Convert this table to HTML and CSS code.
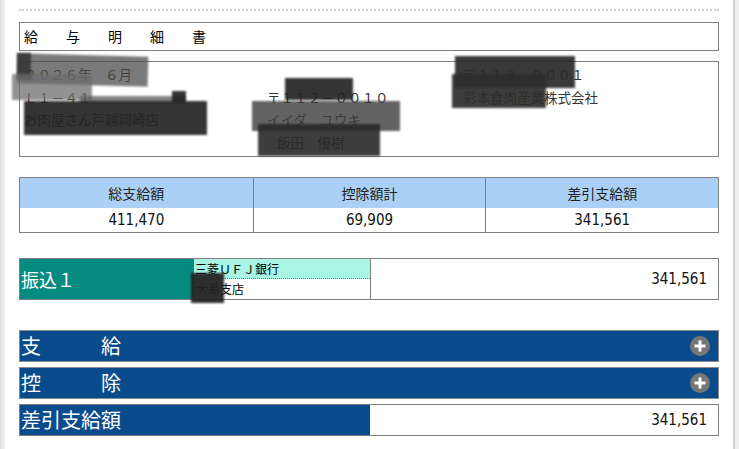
FILE: index.html
```html
<!DOCTYPE html>
<html lang="ja">
<head>
<meta charset="utf-8">
<title>給与明細書</title>
<link rel="stylesheet" href="styles.css">
</head>
<body>
<div class="frame">
  <div class="edge"></div>
  <main class="main">
    <div class="dots"></div>
    <div class="title">給与明細書</div>
    <div class="info">
      <div class="col">
        <div class="line">２０２６年　６月</div>
        <div class="line">Ｌ１－４１</div>
        <div class="line">お肉屋さん戸越岡崎店</div>
      </div>
      <div class="col col-shift">
        <div class="line">〒１１２－００１０</div>
        <div class="line">イイダ　ユウキ</div>
        <div class="line indent">飯田　優樹</div>
      </div>
      <div class="col">
        <div class="line">〒１１３－０００１</div>
        <div class="line">彩本食肉産業株式会社</div>
      </div>
    </div>
    <div class="summary">
      <div class="sum-head">総支給額</div>
      <div class="sum-head">控除額計</div>
      <div class="sum-head">差引支給額</div>
      <div class="sum-val num">411,470</div>
      <div class="sum-val num">69,909</div>
      <div class="sum-val num">341,561</div>
    </div>
    <div class="transfer">
      <div class="tr-label">振込１</div>
      <div class="tr-bank">
        <div class="bank-name">三菱ＵＦＪ銀行</div>
        <div class="branch">大島支店</div>
      </div>
      <div class="tr-amount num">341,561</div>
    </div>
    <div class="bar bar-first">
      <span class="bar-label spaced">支給</span>
      <span class="plus"><svg width="20" height="20" viewBox="0 0 20 20"><circle cx="10" cy="10" r="10" fill="#777"/><path d="M10 4.5v11M4.5 10h11" stroke="#fff" stroke-width="3"/></svg></span>
    </div>
    <div class="bar">
      <span class="bar-label spaced">控除</span>
      <span class="plus"><svg width="20" height="20" viewBox="0 0 20 20"><circle cx="10" cy="10" r="10" fill="#777"/><path d="M10 4.5v11M4.5 10h11" stroke="#fff" stroke-width="3"/></svg></span>
    </div>
    <div class="net">
      <div class="net-label">差引支給額</div>
      <div class="net-amount num">341,561</div>
    </div>
  </main>
  <div class="scrollbar"></div>
</div>
<div class="redact b1"></div>
<div class="redact b2"></div>
<div class="redact b3"></div>
<div class="redact b4"></div>
<div class="redact b5"></div>
<div class="redact b6"></div>
<div class="redact b7"></div>
<div class="redact b8"></div>
<div class="redact b9"></div>
<div class="redact b10"></div>
<div class="redact b11"></div>
<div class="redact b12"></div>
</body>
</html>
```

FILE: styles.css
```css
* { box-sizing: border-box; }
html, body { margin: 0; padding: 0; }
body {
  background: #fff;
  font-family: "Noto Sans CJK JP", "Noto Sans", sans-serif;
  color: #111;
  width: 739px;
  height: 449px;
  overflow: hidden;
  position: relative;
}
.frame { display: flex; height: 449px; }
.edge { width: 5px; background: linear-gradient(to right, #e0e0e0, #f4f4f4); }
.main { flex: 1; padding: 9px 14px 0 14px; }
.scrollbar { width: 6px; border-left: 2px solid #d4d4d4; background: #eeeeee; }

.dots { border-top: 2px dotted #cfcfcf; }

.title {
  margin-top: 11px;
  height: 29px;
  border: 1px solid #808080;
  font-size: 14px;
  line-height: 27px;
  padding-left: 4px;
  letter-spacing: 28px;
  color: #000;
}

.info {
  margin-top: 10px;
  height: 96px;
  border: 1px solid #808080;
  display: grid;
  grid-template-columns: 243px 196px 1fr;
  padding: 1px 0 0 4px;
  font-size: 13.5px;
  color: #333;
}
.line { line-height: 22.5px; white-space: nowrap; }
.col-shift { padding-top: 22.5px; }
.indent { padding-left: 10px; }

.num {
  font-family: "DejaVu Sans Condensed", "DejaVu Sans", sans-serif;
  font-stretch: condensed;
  font-size: 15px;
  color: #111;
}

.summary {
  margin-top: 20px;
  border: 1px solid #808080;
  display: grid;
  grid-template-columns: repeat(3, 1fr);
  grid-template-rows: 30px 24px;
}
.sum-head {
  background: #aad1f5;
  font-size: 14px;
  color: #222;
  display: flex; align-items: center; justify-content: center;
}
.sum-val { display: flex; align-items: center; justify-content: center; }
.sum-head:nth-child(2), .sum-head:nth-child(3),
.sum-val:nth-child(5), .sum-val:nth-child(6) { border-left: 1px solid #808080; }

.transfer {
  margin-top: 25px;
  height: 42px;
  border: 1px solid #808080;
  display: flex;
}
.tr-label {
  width: 174px;
  background: #078a80;
  color: #fff;
  font-size: 18px;
  display: flex; align-items: center;
  padding-left: 1px;
}
.tr-bank {
  width: 177px;
  border-right: 1px solid #808080;
  display: flex; flex-direction: column;
  font-size: 12px;
  color: #000;
}
.bank-name {
  height: 20px;
  background: #a9f5e3;
  border-bottom: 1px dotted #777;
  line-height: 19px;
  padding-left: 1px;
}
.branch { flex: 1; line-height: 19px; padding-left: 2px; }
.tr-amount {
  flex: 1;
  display: flex; align-items: center; justify-content: flex-end;
  padding-right: 11px;
}

.bar {
  height: 32px;
  margin-top: 5px;
  background: #0a4c8b;
  border: 1px solid #8a8a8a;
  display: flex; align-items: center; justify-content: space-between;
  color: #fff;
}
.bar-first { margin-top: 30px; }
.bar-label { font-size: 20px; line-height: 30px; padding-left: 1px; }
.spaced { letter-spacing: 60px; }
.plus { display: flex; margin-right: 8px; }

.net {
  height: 32px;
  margin-top: 5px;
  border: 1px solid #808080;
  display: flex;
}
.net-label {
  width: 350px;
  background: #0a4c8b;
  color: #fff;
  font-size: 20px;
  line-height: 30px;
  padding-left: 1px;
}
.net-amount {
  flex: 1;
  display: flex; align-items: center; justify-content: flex-end;
  padding-right: 11px;
}

.redact { position: absolute; filter: blur(0.8px); }
.b1 { left: 17px; top: 55px; width: 131px; height: 30px; background: rgba(70,70,70,0.72); transform: rotate(1.5deg); }
.b2 { left: 17px; top: 53px; width: 14px; height: 27px; background: rgba(50,50,50,0.85); }
.b3 { left: 12px; top: 74px; width: 80px; height: 26px; background: rgba(110,110,110,0.75); }
.b4 { left: 80px; top: 96px; width: 105px; height: 7px; background: rgba(90,90,90,0.75); }
.b5 { left: 24px; top: 101px; width: 183px; height: 34px; background: rgba(35,35,35,0.92); }
.b6 { left: 172px; top: 91px; width: 14px; height: 12px; background: rgba(35,35,35,0.92); }
.b7 { left: 285px; top: 78px; width: 68px; height: 22px; background: rgba(35,35,35,0.92); }
.b8 { left: 252px; top: 101px; width: 148px; height: 30px; background: rgba(60,60,60,0.8); }
.b9 { left: 258px; top: 124px; width: 122px; height: 32px; background: rgba(40,40,40,0.9); }
.b10 { left: 455px; top: 56px; width: 120px; height: 32px; background: rgba(40,40,40,0.92); }
.b11 { left: 452px; top: 74px; width: 94px; height: 34px; background: rgba(45,45,45,0.92); }
.b12 { left: 191px; top: 273px; width: 33px; height: 30px; background: rgba(35,35,35,0.95); }
```
